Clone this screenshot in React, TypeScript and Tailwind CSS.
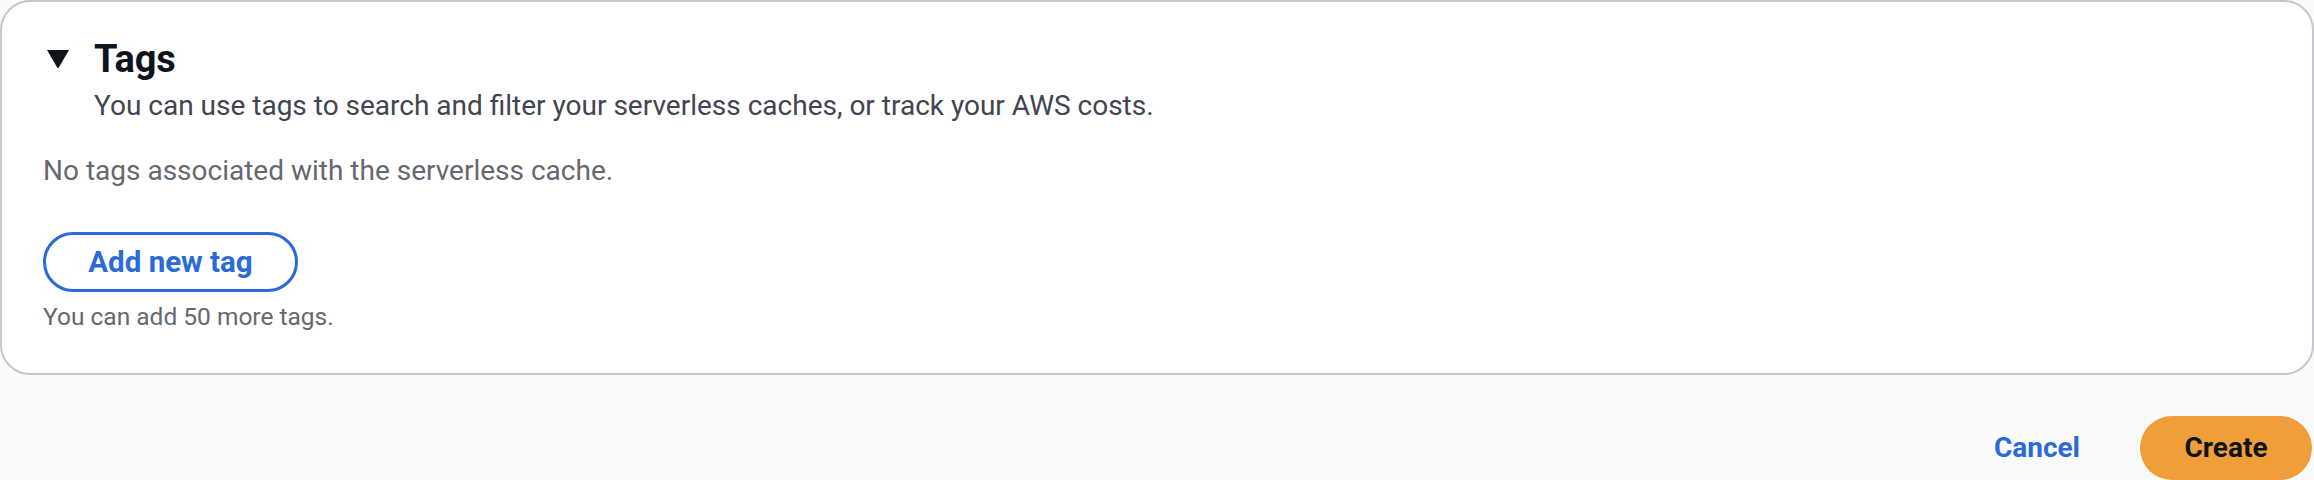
import React from "react";

export default function App() {
  const font = { fontFamily: "Roboto, 'Noto Sans', Arial, sans-serif" };
  return (
    <div
      className="w-[2314px] h-[480px] bg-[#fafafa] overflow-hidden flex flex-col"
      style={font}
    >
      <div className="h-[375px] shrink-0 bg-white border-2 border-[#c6c6cd] rounded-[30px] flex flex-col">
        <div className="flex items-start pl-[44px] pt-[35px]">
          <svg
            width="24"
            height="20"
            viewBox="0 0 24 20"
            className="mt-[12px] shrink-0"
          >
            <path d="M1 1 H23 L12.8 18.6 Q12 19.6 11.2 18.6 Z" fill="#0f141a" />
          </svg>
          <div className="ml-[24px] flex flex-col">
            <h2 className="text-[38px] leading-[44px] font-bold text-[#0f141a] tracking-[-0.2px]">
              Tags
            </h2>
            <p className="mt-[7px] text-[28px] leading-[36px] text-[#414550]">
              You can use tags to search and filter your serverless caches, or track your AWS costs.
            </p>
          </div>
        </div>
        <div className="pl-[41px] mt-[29px]">
          <p className="text-[28px] leading-[36px] text-[#656871]">
            No tags associated with the serverless cache.
          </p>
          <button className="mt-[43px] w-[255px] h-[60px] rounded-full border-[3px] border-[#2a6bd9] text-[#2a6bd9] text-[29.5px] font-bold flex items-center justify-center">
            Add new tag
          </button>
          <p className="mt-[10px] text-[24.5px] leading-[30px] text-[#656871]">
            You can add 50 more tags.
          </p>
        </div>
      </div>
      <div className="flex justify-end items-center mt-[41px] pr-[2px]">
        <button className="text-[28px] font-bold text-[#2a6bd9] px-[30px] h-[64px]">
          Cancel
        </button>
        <button className="ml-[30px] w-[172px] h-[64px] rounded-full bg-[#f09e3a] text-[28px] font-bold text-[#0f141a]">
          Create
        </button>
      </div>
    </div>
  );
}
